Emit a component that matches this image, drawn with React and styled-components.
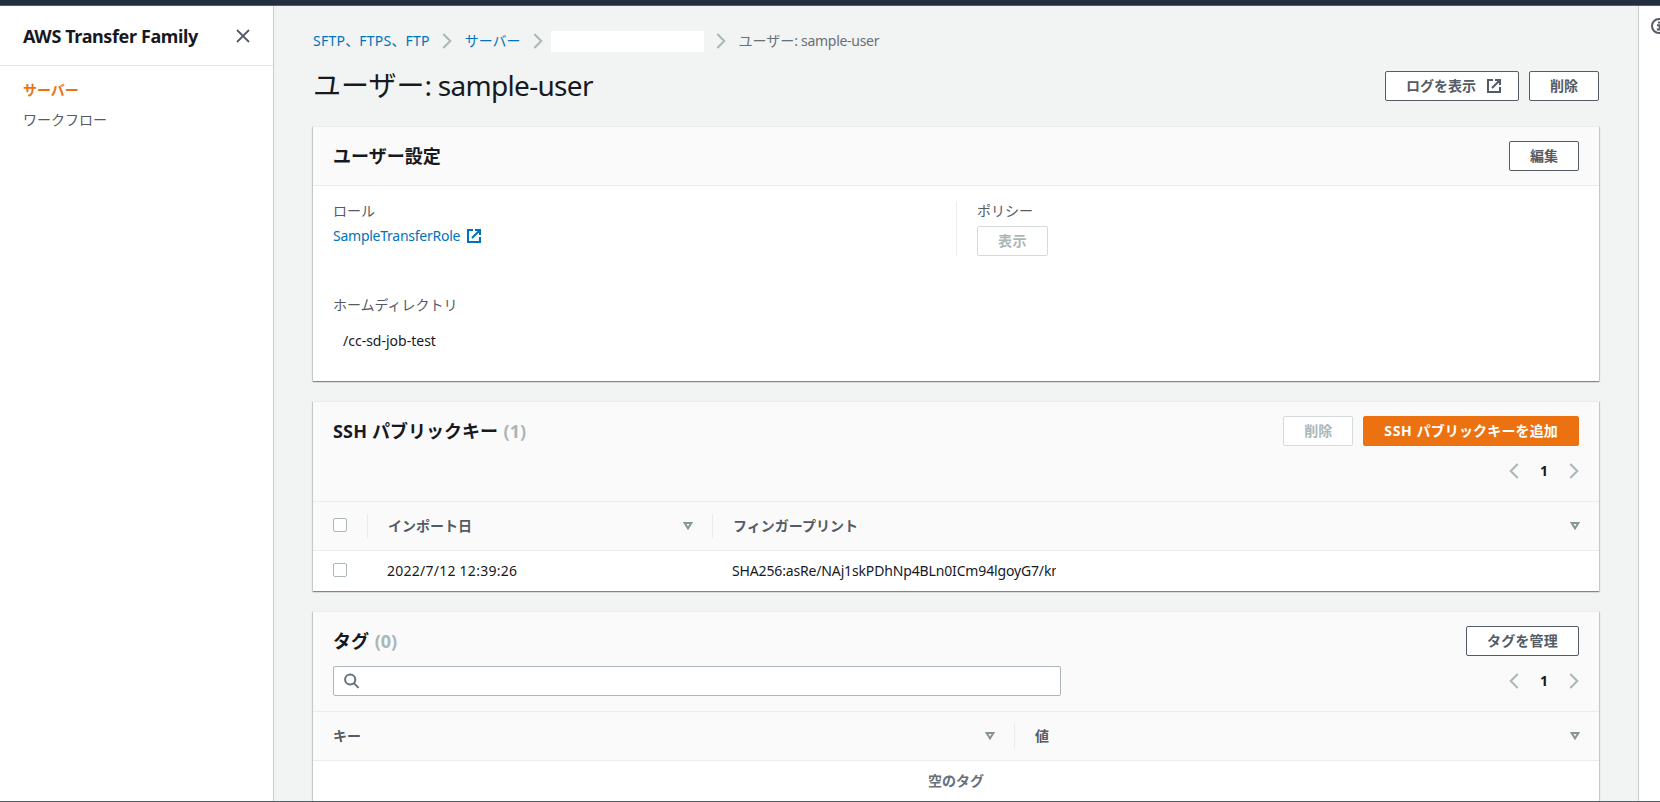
import React from 'react';
import styled, { createGlobalStyle, css } from 'styled-components';

const GlobalStyle = createGlobalStyle`
  *, *::before, *::after { box-sizing: border-box; }
  html, body, #root { height: 100%; }
  body {
    margin: 0;
    overflow: hidden;
    background: #f2f3f3;
    color: #16191f;
    font: 400 14px/22px "Noto Sans", "Noto Sans CJK JP", sans-serif;
  }
  h1, h2, p, ul { margin: 0; padding: 0; }
  svg { display: block; flex: none; }
`;

const Page = styled.div`
  display: flex;
  flex-direction: column;
  height: 802px;
  border-bottom: 1px solid #545b64;
  overflow: hidden;
`;

const TopBar = styled.header`
  flex: none;
  height: 6px;
  background: #232f3e;
  border-bottom: 1px solid #5e5a6b;
`;

const Body = styled.div`
  flex: 1;
  display: flex;
  min-height: 0;
`;

const Sidebar = styled.nav`
  flex: none;
  width: 274px;
  background: #fff;
  border-right: 1px solid #c6cccc;
`;

const SidebarHeader = styled.div`
  display: flex;
  align-items: center;
  justify-content: space-between;
  height: 60px;
  padding: 0 23px;
  border-bottom: 1px solid #e4e8e8;
`;

const SidebarTitle = styled.h2`
  font-size: 18px;
  line-height: 22px;
  font-weight: 700;
  letter-spacing: -0.38px;
  white-space: nowrap;
`;

const NavList = styled.ul`
  display: flex;
  flex-direction: column;
  gap: 8px;
  padding: 13px 23px;
  list-style: none;
`;

const NavItem = styled.li`
  color: ${(p) => (p.$active ? '#ec7211' : '#545b64')};
  font-weight: ${(p) => (p.$active ? 700 : 400)};
`;

const Main = styled.main`
  flex: 1;
  min-width: 0;
  padding: 24px 39px 0;
  background: #f2f3f3;
`;

const HelpPanel = styled.aside`
  flex: none;
  width: 22px;
  padding: 12px 0 0 12px;
  overflow: hidden;
  background: #fff;
  border-left: 1px solid #c6cccc;
`;

const Breadcrumbs = styled.div`
  display: flex;
  align-items: center;
  height: 22px;
  color: #687078;
  white-space: nowrap;
`;

const Crumb = styled.span`
  color: ${(p) => (p.$current ? '#687078' : '#0073bb')};
`;

const RedactedCrumb = styled.span`
  width: 153px;
  height: 21px;
  background: #fff;
`;

const CrumbArrow = styled.span`
  padding: 0 ${(p) => p.$after ?? 13}px 0 12px;
`;

const Latin = styled.span`
  letter-spacing: ${(p) => p.$track}px;
`;

const TitleRow = styled.div`
  display: flex;
  justify-content: space-between;
  align-items: center;
  height: 36px;
  margin: 16px 0 22px;
`;

const PageTitle = styled.h1`
  padding-bottom: 2px;
  font-size: 28px;
  line-height: 34px;
  font-weight: 400;
  white-space: nowrap;
`;

const Actions = styled.div`
  display: flex;
  gap: 10px;
`;

const Button = styled.button`
  display: inline-flex;
  align-items: center;
  gap: 11px;
  height: 30px;
  padding: 0 ${(p) => (p.$iconEnd ? 17 : 20)}px 0 20px;
  border: 1px solid #545b64;
  border-radius: 2px;
  background: #fff;
  color: #545b64;
  font: inherit;
  font-weight: 700;
  line-height: 20px;
  letter-spacing: ${(p) => p.$track ?? 0}px;
  white-space: nowrap;
  ${(p) => p.disabled && css`
    border-color: #d5dbdb;
    color: #aab7b8;
  `}
  ${(p) => p.$primary && css`
    border-color: #ec7211;
    background: #ec7211;
    color: #fff;
  `}
`;

const Card = styled.section`
  height: ${(p) => p.$height}px;
  margin-bottom: 20px;
  border-top: 1px solid #eaeded;
  background: #fff;
  box-shadow: 0 1px 1px 0 rgba(0, 28, 36, 0.3), 1px 1px 1px 0 rgba(0, 28, 36, 0.15),
    -1px 1px 1px 0 rgba(0, 28, 36, 0.15);
`;

const CardHeader = styled.div`
  height: ${(p) => p.$height}px;
  padding: 14px 20px 0;
  border-bottom: 1px solid #eaeded;
  background: #fafafa;
`;

const HeaderLine = styled.div`
  display: flex;
  justify-content: space-between;
  align-items: center;
  height: 30px;
`;

const CardTitle = styled.h2`
  font-size: 18px;
  line-height: 22px;
  font-weight: 700;
  white-space: pre;
`;

const Count = styled.span`
  padding-left: 1px;
  color: #aab7b8;
`;

const ToolLine = styled.div`
  display: flex;
  align-items: center;
  height: 30px;
  margin-top: 10px;
`;

const SearchBox = styled.label`
  display: flex;
  align-items: center;
  width: 728px;
  height: 30px;
  padding-left: 10px;
  border: 1px solid #aab7b8;
  border-radius: 2px;
  background: #fff;
`;

const SearchInput = styled.input`
  flex: 1;
  border: 0;
  outline: 0;
  background: none;
  font: inherit;
`;

const Pager = styled.div`
  display: flex;
  align-items: center;
  justify-content: space-between;
  width: 70px;
  margin-left: auto;
  font-weight: 700;
`;

const Settings = styled.div`
  display: grid;
  grid-template-columns: 643px 1fr;
  row-gap: 39px;
  padding-top: 15px;
`;

const Field = styled.div`
  padding-left: 20px;
  min-height: 55px;
  ${(p) => p.$divided && css`
    border-left: 1px solid #eaeded;
  `}
`;

const FieldLabel = styled.div`
  height: ${(p) => p.$height ?? 25}px;
  line-height: 19px;
  color: #545b64;
`;

const FieldLink = styled.a`
  display: flex;
  align-items: center;
  gap: 7px;
  color: #0073bb;
  line-height: 20px;
`;

const PathValue = styled.div`
  padding-left: 10px;
`;

const HeadRow = styled.div`
  display: grid;
  grid-template-columns: ${(p) => p.$columns};
  align-items: center;
  height: 49px;
  border-bottom: 1px solid #eaeded;
  background: #fafafa;
  color: #545b64;
  font-weight: 700;
`;

const HeadCell = styled.div`
  display: flex;
  align-items: center;
  justify-content: space-between;
  height: 24px;
  padding: 0 19px 0 20px;
  border-left: 1px solid #eaeded;
  ${(p) => p.$first && css`
    border-left: 0;
  `}
`;

const DataRow = styled.div`
  display: grid;
  grid-template-columns: ${(p) => p.$columns};
  align-items: center;
  height: 40px;
`;

const DataCell = styled.div`
  padding-left: 20px;
  white-space: nowrap;
`;

const Fingerprint = styled.div`
  width: 324px;
  overflow: hidden;
  letter-spacing: -0.15px;
`;

const Checkbox = styled.span`
  display: block;
  width: 14px;
  height: 14px;
  margin-bottom: 2px;
  border: 1px solid #aab7b8;
  border-radius: 2px;
  background: #fff;
`;

const EmptyState = styled.div`
  padding-top: 10px;
  text-align: center;
  font-weight: 700;
  line-height: 20px;
  color: #687078;
`;

const Chevron = ({ left }) => (
  <svg width="10" height="16" viewBox="0 0 10 16" fill="none" stroke="#aab7b8" strokeWidth="2">
    <path d={left ? 'M8.7 1L1.7 8l7 7' : 'M1.3 1l7 7-7 7'} />
  </svg>
);

const External = () => (
  <svg width="14" height="14" viewBox="0 0 14 14" fill="none" stroke="currentColor" strokeWidth="2">
    <path d="M6 1H1v12h12V8M8 1h5v5M13 1L5 9" />
  </svg>
);

const CloseIcon = () => (
  <svg width="14" height="14" viewBox="0 0 14 14" fill="none" stroke="#545b64" strokeWidth="1.8">
    <path d="M1 1l12 12M13 1L1 13" />
  </svg>
);

const SearchIcon = () => (
  <svg width="16" height="16" viewBox="0 0 16 16" fill="none" stroke="#687078" strokeWidth="2">
    <circle cx="6.2" cy="6.5" r="5.1" />
    <path d="M9.8 10.1l4.8 4.8" />
  </svg>
);

const SortIcon = () => (
  <svg width="10" height="8" viewBox="0 0 10 8" fill="none" stroke="#879596" strokeWidth="2">
    <path d="M1.6 1h6.8L5 6.4z" />
  </svg>
);

const InfoIcon = () => (
  <svg width="16" height="16" viewBox="0 0 16 16" fill="none" stroke="#545b64" strokeWidth="2">
    <circle cx="8" cy="8" r="7" />
    <path d="M6 7.2h2.6V12M5.8 11.4h5M7 4.4h2" />
  </svg>
);

const Pagination = () => (
  <Pager>
    <Chevron left />
    <span>1</span>
    <Chevron />
  </Pager>
);

const KEY_COLUMNS = '54px 345px 1fr';
const TAG_COLUMNS = '701px 1fr';

export default function App() {
  return (
    <>
      <GlobalStyle />
      <Page>
        <TopBar />
        <Body>
          <Sidebar>
            <SidebarHeader>
              <SidebarTitle>AWS Transfer Family</SidebarTitle>
              <CloseIcon />
            </SidebarHeader>
            <NavList>
              <NavItem $active>サーバー</NavItem>
              <NavItem>ワークフロー</NavItem>
            </NavList>
          </Sidebar>

          <Main>
            <Breadcrumbs>
              <Crumb><Latin $track={0.25}>SFTP</Latin>、<Latin $track={0.25}>FTPS</Latin>、<Latin $track={0.25}>FTP</Latin></Crumb>
              <CrumbArrow><Chevron /></CrumbArrow>
              <Crumb>サーバー</Crumb>
              <CrumbArrow $after={8}><Chevron /></CrumbArrow>
              <RedactedCrumb />
              <CrumbArrow><Chevron /></CrumbArrow>
              <Crumb $current>ユーザー<Latin $track={-0.3}>: sample-user</Latin></Crumb>
            </Breadcrumbs>

            <TitleRow>
              <PageTitle>ユーザー<Latin $track={-0.7}>: sample-user</Latin></PageTitle>
              <Actions>
                <Button $iconEnd>ログを表示<External /></Button>
                <Button>削除</Button>
              </Actions>
            </TitleRow>

            <Card $height={255}>
              <CardHeader $height={59}>
                <HeaderLine>
                  <CardTitle>ユーザー設定</CardTitle>
                  <Button>編集</Button>
                </HeaderLine>
              </CardHeader>
              <Settings>
                <Field>
                  <FieldLabel>ロール</FieldLabel>
                  <FieldLink><Latin $track={-0.25}>SampleTransferRole</Latin><External /></FieldLink>
                </Field>
                <Field $divided>
                  <FieldLabel>ポリシー</FieldLabel>
                  <Button disabled $track={0.4}>表示</Button>
                </Field>
                <Field>
                  <FieldLabel $height={35}>ホームディレクトリ</FieldLabel>
                  <PathValue>/cc-sd-job-test</PathValue>
                </Field>
              </Settings>
            </Card>

            <Card $height={190}>
              <CardHeader $height={100}>
                <HeaderLine>
                  <CardTitle><Latin $track={0.15}>SSH </Latin>パブリックキー <Count>(1)</Count></CardTitle>
                  <Actions>
                    <Button disabled>削除</Button>
                    <Button $primary $track={0.15}><span><Latin $track={0.6}>SSH </Latin>パブリックキーを追加</span></Button>
                  </Actions>
                </HeaderLine>
                <ToolLine><Pagination /></ToolLine>
              </CardHeader>
              <HeadRow $columns={KEY_COLUMNS}>
                <HeadCell $first><Checkbox /></HeadCell>
                <HeadCell>インポート日<SortIcon /></HeadCell>
                <HeadCell>フィンガープリント<SortIcon /></HeadCell>
              </HeadRow>
              <DataRow $columns={KEY_COLUMNS}>
                <DataCell><Checkbox /></DataCell>
                <DataCell><Latin $track={0.25}>2022/7/12 12:39:26</Latin></DataCell>
                <DataCell><Fingerprint>SHA256:asRe/NAj1skPDhNp4BLn0ICm94lgoyG7/kn</Fingerprint></DataCell>
              </DataRow>
            </Card>

            <Card $height={255}>
              <CardHeader $height={100}>
                <HeaderLine>
                  <CardTitle>タグ <Count>(0)</Count></CardTitle>
                  <Button $track={0.2}>タグを管理</Button>
                </HeaderLine>
                <ToolLine>
                  <SearchBox>
                    <SearchIcon />
                    <SearchInput />
                  </SearchBox>
                  <Pagination />
                </ToolLine>
              </CardHeader>
              <HeadRow $columns={TAG_COLUMNS}>
                <HeadCell $first>キー<SortIcon /></HeadCell>
                <HeadCell>値<SortIcon /></HeadCell>
              </HeadRow>
              <EmptyState>空のタグ</EmptyState>
            </Card>
          </Main>

          <HelpPanel>
            <InfoIcon />
          </HelpPanel>
        </Body>
      </Page>
    </>
  );
}
